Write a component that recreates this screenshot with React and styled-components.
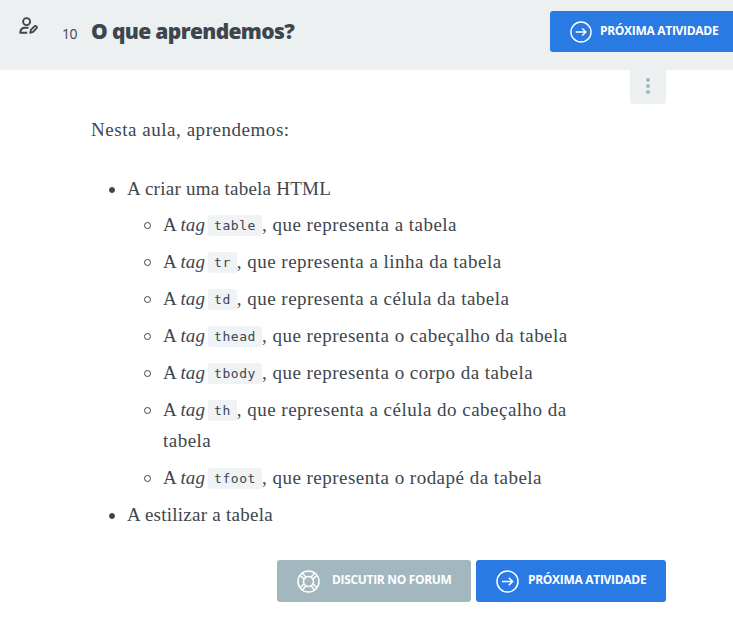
import React from 'react';
import styled, { createGlobalStyle, css } from 'styled-components';

const GlobalStyle = createGlobalStyle`
  * { box-sizing: border-box; }
  body {
    margin: 0;
    background: #fff;
    color: #3d464d;
    font-family: 'Open Sans', sans-serif;
    overflow: hidden;
  }
`;

const Page = styled.div`
  width: 733px;
  height: 630px;
  overflow: hidden;
`;

const Header = styled.header`
  display: flex;
  align-items: flex-start;
  height: 70px;
  background: #ecf0f1;
`;

const TeacherIcon = styled.svg`
  flex: none;
  width: 20px;
  height: 20px;
  margin: 16px 0 0 19px;
`;

const Title = styled.h1`
  display: flex;
  align-items: baseline;
  flex: 1;
  margin: 17px 0 0 23px;
  font-size: 21px;
  line-height: 28px;
  font-weight: 800;
  letter-spacing: -0.64px;
  white-space: nowrap;
`;

const Number = styled.span`
  width: 29px;
  font-size: 14px;
  font-weight: 400;
  letter-spacing: -0.4px;
`;

const Button = styled.button`
  display: flex;
  align-items: center;
  flex: none;
  width: ${(p) => p.$width}px;
  height: ${(p) => p.$height || 42}px;
  padding: 0 0 0 20px;
  border: 0;
  border-radius: 3px;
  background: ${(p) => (p.$muted ? '#a3b7bf' : '#2a7ae4')};
  color: #fff;
  font: 700 12px/18px 'Open Sans', sans-serif;
  letter-spacing: ${(p) => (p.$muted ? '-0.32px' : '-0.3px')};
  text-transform: uppercase;
  white-space: nowrap;

  svg {
    flex: none;
    width: 23px;
    height: 23px;
    margin-right: ${(p) => (p.$muted ? 12 : 9)}px;
  }
  span {
    padding-bottom: 2px;
  }
`;

const TopButton = styled(Button)`
  margin-top: 11px;
  border-radius: 3px 0 0 3px;
  svg { margin-right: 8px; width: 22px; height: 22px; }
`;

const Main = styled.main`
  width: 575px;
  margin-left: 91px;
`;

const Menu = styled.button`
  display: flex;
  flex-direction: column;
  align-items: center;
  justify-content: center;
  gap: 2.3px;
  width: 36px;
  height: 34px;
  margin: 0 0 0 auto;
  padding: 0 0 2px;
  border: 0;
  border-radius: 0 0 3px 3px;
  background: #ecf0f1;
`;

const Dot = styled.i`
  width: 4px;
  height: 4px;
  border-radius: 50%;
  background: #a3b7bf;
`;

const serif = css`
  font-family: 'Liberation Serif', serif;
  font-size: 19px;
  line-height: 31px;
`;

const Intro = styled.p`
  ${serif}
  margin: 10px 0 28px;
  letter-spacing: 0.54px;
`;

const List = styled.ul`
  ${serif}
  display: grid;
  gap: 6px;
  margin: 0;
  padding: 0 0 0 36px;
  list-style: none;
`;

const Item = styled.li`
  display: flex;
  white-space: nowrap;

  &::before {
    content: '';
    flex: none;
    box-sizing: border-box;
    width: ${(p) => (p.$nested ? 7 : 6)}px;
    height: ${(p) => (p.$nested ? 7 : 6)}px;
    margin: ${(p) => (p.$nested ? '13px 12px 0 -19px' : '14px 12px 0 -18px')};
    border: 1px solid #3d464d;
    border-radius: 50%;
    background: ${(p) => (p.$nested ? 'transparent' : '#3d464d')};
  }
`;

const Sublist = styled(List)`
  margin-top: -1px;
`;

const Text = styled.div`
  letter-spacing: ${(p) => p.$spacing ?? 0.25}px;
`;

const Lead = styled.span`
  display: inline-block;
  width: 45px;
  letter-spacing: 0.1px;
  word-spacing: -0.2px;
  vertical-align: top;
`;

const Code = styled.code`
  display: inline-block;
  height: 21px;
  margin-top: 6px;
  vertical-align: top;
  padding: 0 6px;
  border-radius: 3px;
  background: #eff3f6;
  font: 13px/22px 'DejaVu Sans Mono', monospace;
  letter-spacing: 0.57px;
`;

const Actions = styled.footer`
  display: flex;
  justify-content: flex-end;
  gap: 5px;
  margin-top: 30px;
`;

const ArrowIcon = () => (
  <svg viewBox="0 0 23 23" fill="none" stroke="currentColor" strokeWidth="1.5">
    <circle cx="11.5" cy="11.5" r="10.5" />
    <path d="M6 11.5h10.5M12.8 7.8l3.8 3.7-3.8 3.7" />
  </svg>
);

const BuoyIcon = () => (
  <svg viewBox="0 0 23 23" fill="none" stroke="currentColor" strokeWidth="1.5">
    <circle cx="11.5" cy="11.5" r="10.5" />
    <circle cx="11.5" cy="11.5" r="5" />
    <path d="M3 5.3l4.2 3.8M5.3 3l3.8 4.2M17.7 3l-3.8 4.2M20 5.3l-4.2 3.8M3 17.7l4.2-3.8M5.3 20l3.8-4.2M17.7 20l-3.8-4.2M20 17.7l-4.2-3.8" />
  </svg>
);

const tags = [
  ['table', ', que representa a tabela'],
  ['tr', ', que representa a linha da tabela'],
  ['td', ', que representa a célula da tabela'],
  ['thead', ', que representa o cabeçalho da tabela'],
  ['tbody', ', que representa o corpo da tabela'],
  ['th', ', que representa a célula do cabeçalho da', 'tabela'],
  ['tfoot', ', que representa o rodapé da tabela'],
];

export default function App() {
  return (
    <Page>
      <GlobalStyle />
      <Header>
        <TeacherIcon viewBox="0 0 20 20" fill="none" stroke="#3d464d" strokeWidth="1.9" strokeLinejoin="round">
          <circle cx="7.6" cy="5.6" r="3.5" />
          <path d="M9.5 11.8H6C3.2 11.8 1.5 13.4 1.2 16.8H8.2" />
          <path d="M11.2 16.8l.7-2.9 3.7-3.7c.5-.5 1.1-.5 1.6 0l.4.4c.5.5.5 1.1 0 1.6l-3.5 3.7z" />
        </TeacherIcon>
        <Title><Number>10</Number>O que aprendemos?</Title>
        <TopButton $width={183} $height={41}><ArrowIcon /><span>Próxima Atividade</span></TopButton>
      </Header>
      <Main>
        <Menu aria-label="Menu"><Dot /><Dot /><Dot /></Menu>
        <Intro>Nesta aula, aprendemos:</Intro>
        <List>
          <Item><Text>A criar uma tabela HTML</Text></Item>
          <Sublist>
            {tags.map(([tag, text, rest]) => (
              <Item key={tag} $nested>
                <Text $spacing={0.48}>
                  <Lead>A <em>tag</em></Lead>
                  <Code>{tag}</Code>
                  {text}
                  {rest && <><br />{rest}</>}
                </Text>
              </Item>
            ))}
          </Sublist>
          <Item><Text>A estilizar a tabela</Text></Item>
        </List>
        <Actions>
          <Button $muted $width={194}><BuoyIcon /><span>Discutir no Forum</span></Button>
          <Button $width={190}><ArrowIcon /><span>Próxima Atividade</span></Button>
        </Actions>
      </Main>
    </Page>
  );
}
